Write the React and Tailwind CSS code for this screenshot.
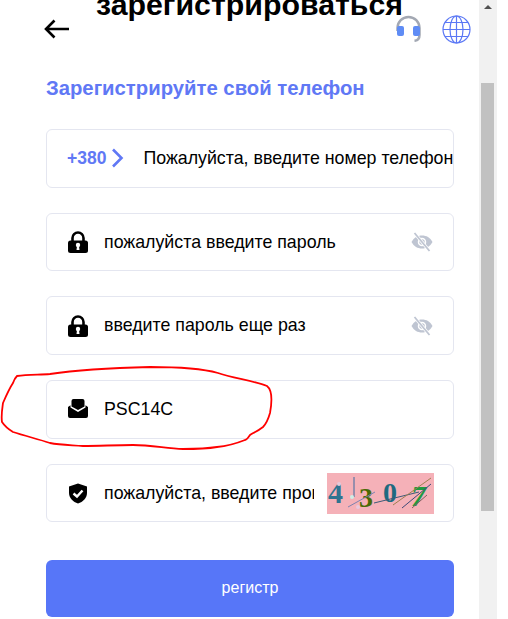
import React from 'react';

const LockIcon = () => (
  <svg width="20" height="22" viewBox="0 0 20 22" className="shrink-0">
    <path d="M4.500 11V7a5.500 5.500 0 0 1 11 0v4" fill="none" stroke="#000" strokeWidth="2.600" />
    <rect x="0" y="9.500" width="20" height="12.500" rx="2.500" fill="#000" />
    <circle cx="10" cy="14" r="2.200" fill="#fff" />
    <path d="M9 15H11L11.500 19H8.500Z" fill="#fff" />
  </svg>
);

const EyeOff = () => (
  <svg width="22" height="20" viewBox="0 0 22 20" className="shrink-0">
    <path d="M0.500 10C3 5.500 6.500 3.500 11 3.500S19 5.500 21.500 10C19 14.500 15.500 16.500 11 16.500S3 14.500 0.500 10Z" fill="#bfc5d2" />
    <circle cx="11" cy="10" r="3.500" fill="none" stroke="#fff" strokeWidth="1.500" />
    <path d="M3.500 1L18.500 19" stroke="#fff" strokeWidth="3.200" />
    <path d="M3.500 1L18.500 19" stroke="#bfc5d2" strokeWidth="1.800" />
  </svg>
);

const MailIcon = () => (
  <svg width="20" height="20" viewBox="0 0 20 20" className="shrink-0">
    <path d="M3.500 2A2 2 0 0 1 5.500 0h9A2 2 0 0 1 16.500 2V7.500L10 11L3.500 7.500Z" fill="#000" />
    <path d="M0 8L2.500 6.200V8.500L10 13L17.500 8.500V6.200L20 8V17a2 2 0 0 1-2 2H2a2 2 0 0 1-2-2Z" fill="#000" />
  </svg>
);

const ShieldIcon = () => (
  <svg width="20" height="21" viewBox="0 0 20 21" className="shrink-0">
    <path d="M10 0.500L19 3.500V10C19 15 15 19 10 20.500C5 19 1 15 1 10V3.500Z" fill="#000" />
    <path d="M5.500 10.500L9 13.500L14.500 7.500" fill="none" stroke="#fff" strokeWidth="2.400" />
  </svg>
);

const Captcha = () => (
  <svg width="107" height="41" viewBox="0 0 107 41" className="shrink-0">
    <rect width="107" height="41" fill="#f5b1b8" />
    <text x="1" y="30" fontFamily="Liberation Serif" fontWeight="700" fontSize="30" fill="#2f7390">4</text>
    <text x="32" y="34" fontFamily="Liberation Serif" fontWeight="700" fontSize="28" fill="#4a6a05">3</text>
    <text x="56" y="29" fontFamily="Liberation Serif" fontWeight="700" fontSize="28" fill="#1f6a80">0</text>
    <text x="84" y="33" fontFamily="Liberation Serif" fontWeight="700" fontStyle="italic" fontSize="30" fill="#1f9a40">7</text>
    <path d="M27 4V24" stroke="#3a6aa0" strokeWidth="1" />
    <path d="M21 34L48 19" stroke="#7d82b0" strokeWidth="1" />
    <path d="M47 30L92 19" stroke="#3c5a78" strokeWidth="1" />
    <path d="M66 32L104 5" stroke="#a08050" strokeWidth="1" />
    <path d="M75 35L104 11" stroke="#404a78" strokeWidth="1" />
    <path d="M85 35L100 22" stroke="#806060" strokeWidth="1" />
    <circle cx="25" cy="24" r="2" fill="#cfeee5" />
    <circle cx="12" cy="11" r="2" fill="#e5c8d8" />
    <circle cx="31" cy="34" r="2" fill="#e8c8dc" />
  </svg>
);

function Field({ icon, text, right, className = '' }) {
  return (
    <div className={`flex h-[58.700px] items-center rounded-md border border-[#e4e6f0] bg-white pl-[21px] ${className}`}>
      <div className="flex w-[36px] shrink-0 items-center">{icon}</div>
      {text}
      {right}
    </div>
  );
}

export default function App() {
  return (
    <div className="relative flex h-[619px] w-[508px] overflow-hidden bg-white font-['Liberation_Sans',sans-serif] text-black">
      <div className="w-[479px] shrink-0">
        {/* Header */}
        <div className="flex h-[46px] items-start">
          <svg width="26" height="20" viewBox="0 0 26 20" className="ml-[44px] mt-[19px] shrink-0">
            <path d="M25 10H2M10.500 1.500L2 10L10.500 18.500" fill="none" stroke="#000" strokeWidth="2.600" />
          </svg>
          <h1 className="-mt-[12px] ml-[26px] w-[299px] whitespace-nowrap text-[30.300px] font-bold leading-[34px]">зарегистрироваться</h1>
          <svg width="27" height="27" viewBox="0 0 27 27" className="mt-[15px] shrink-0">
            <path d="M2.500 16V13a11 11 0 0 1 22 0v7c0 3.500-1.500 5.500-5 5.800" fill="none" stroke="#a3a8b3" strokeWidth="2.500" />
            <rect x="2" y="11" width="7" height="10" rx="2" fill="#5f8cf5" />
            <rect x="18" y="11" width="7" height="10" rx="2" fill="#5f8cf5" />
          </svg>
          <svg width="29" height="29" viewBox="0 0 29 29" className="ml-[20px] mt-[14.500px] shrink-0" fill="none" stroke="#5b78f5" strokeWidth="1.200">
            <circle cx="14.500" cy="14.500" r="13.500" />
            <ellipse cx="14.500" cy="14.500" rx="6.500" ry="13.500" />
            <path d="M14.500 1V28M1 14.500H28M3 7.500H26M3 21.500H26" />
          </svg>
        </div>

        <div className="pl-[46px] pr-[25px]">
          <h2 className="mt-[31px] whitespace-nowrap text-[20.300px] font-bold leading-[22px] text-[#6078f5]">Зарегистрируйте свой телефон</h2>

          <div className="mt-[30px] flex flex-col gap-[25px] text-[17.800px]">
            <div className="flex h-[58.700px] items-center overflow-hidden rounded-md border border-[#e4e6f0] bg-white pl-[20px]">
              <span className="text-[17.500px] font-bold text-[#6078f5]">+380</span>
              <svg width="13" height="20" viewBox="0 0 13 20" className="ml-[5px] shrink-0">
                <path d="M2 1.500L10.500 10L2 18.500" fill="none" stroke="#6078f5" strokeWidth="2.600" />
              </svg>
              <span className="ml-[19px] whitespace-nowrap">Пожалуйста, введите номер телефона</span>
            </div>
            <Field
              icon={<LockIcon />}
              text={<span>пожалуйста введите пароль</span>}
              right={<div className="ml-auto mr-[20px]"><EyeOff /></div>}
            />
            <Field
              icon={<LockIcon />}
              text={<span>введите пароль еще раз</span>}
              right={<div className="ml-auto mr-[20px]"><EyeOff /></div>}
            />
            <Field icon={<MailIcon />} text={<span>PSC14C</span>} />
            <Field
              icon={<ShieldIcon />}
              text={<span className="w-[210px] shrink-0 overflow-hidden whitespace-nowrap">пожалуйста, введите проверочный код</span>}
              right={<div className="ml-[13px]"><Captcha /></div>}
            />
          </div>

          <button className="mt-[37.500px] flex h-[57px] w-full items-center justify-center rounded-md bg-[#5776f8] text-base text-white">регистр</button>
        </div>
      </div>

      {/* Scrollbar */}
      <div className="relative h-full w-[18px] shrink-0 bg-[#f1f1f1]">
        <div className="absolute left-[5px] top-[5px] h-0 w-0 border-x-4 border-b-4 border-x-transparent border-b-[#505050]" />
        <div className="absolute left-[2px] top-[83px] h-[428px] w-[13px] bg-[#c1c1c1]" />
      </div>

      {/* Hand-drawn red circle */}
      <svg width="290" height="100" viewBox="0 0 290 100" className="pointer-events-none absolute left-0 top-[360px]" fill="none" stroke="#f00" strokeWidth="1.800">
        <path d="M17 16C28 14 40 15 50 14C70 11 110 8 150 7C175 7 200 8 218 13C232 18 255 21 267 26C272 30 272 42 270 53C268 60 266 64 263 67C258 71 253 73 250 75C248 78 246 80 245 80C235 84 228 86 217 87C205 89 195 89 183 89C165 88 150 85 133 85C115 85 100 86 83 86C70 85 60 85 50 83C38 79 25 76 13 72C8 69 4 65 2 62C1 56 2 50 3 43C6 36 9 29 13 23C14 20 15 18 17 16Z" />
      </svg>
    </div>
  );
}
